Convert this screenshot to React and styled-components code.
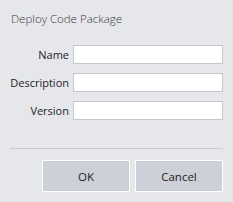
import React from 'react';
import styled, { createGlobalStyle } from 'styled-components';

const GlobalStyle = createGlobalStyle`
  html, body {
    margin: 0;
    padding: 0;
    background: #e6e7eb;
    font-family: "Open Sans", "Noto Sans", sans-serif;
  }
`;

const Dialog = styled.div`
  width: 233px;
  height: 202px;
  box-sizing: border-box;
  background: #e6e7eb;
  padding: 11px 10px 0 10px;
  display: flex;
  flex-direction: column;
`;

const Title = styled.div`
  font-size: 11.5px;
  font-weight: 300;
  color: #3a3a3a;
  line-height: 16px;
  padding-left: 1px;
`;

const Form = styled.div`
  margin-top: 18px;
  display: grid;
  grid-template-columns: 59px 150px;
  column-gap: 4px;
  row-gap: 9px;
  align-items: center;
`;

const Label = styled.label`
  font-size: 11px;
  color: #222;
  text-align: right;
  white-space: nowrap;
`;

const Input = styled.input`
  box-sizing: border-box;
  width: 150px;
  height: 19px;
  border: 1px solid #c6c7cc;
  background: #fff;
  margin: 0;
  padding: 0 3px;
  outline: none;
`;

const Divider = styled.div`
  margin-top: 28px;
  height: 1px;
  background: #c9cacf;
  width: 213px;
`;

const Buttons = styled.div`
  margin-top: 11px;
  display: flex;
  justify-content: flex-end;
  gap: 5px;
`;

const Button = styled.button`
  box-sizing: border-box;
  width: 88px;
  height: 32px;
  background: #cdd0d9;
  border: 1px solid #fff;
  font-family: "Open Sans", "Noto Sans", sans-serif;
  font-size: 11.5px;
  color: #222;
  padding: 0;
`;

export default function App() {
  return (
    <>
      <GlobalStyle />
      <Dialog>
        <Title>Deploy Code Package</Title>
        <Form>
          <Label>Name</Label>
          <Input />
          <Label>Description</Label>
          <Input />
          <Label>Version</Label>
          <Input />
        </Form>
        <Divider />
        <Buttons>
          <Button>OK</Button>
          <Button>Cancel</Button>
        </Buttons>
      </Dialog>
    </>
  );
}
